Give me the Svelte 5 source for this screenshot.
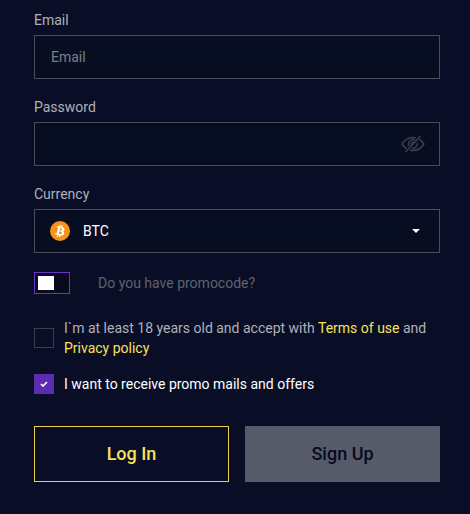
<script lang="ts">
	let email = $state('');
	let password = $state('');
	let currency = $state('BTC');
	let showPassword = $state(false);
	let hasPromocode = $state(false);
	let acceptTerms = $state(false);
	let acceptPromo = $state(true);
</script>

<form class="signup" onsubmit={(e) => e.preventDefault()}>
	<div class="field">
		<label for="email">Email</label>
		<input id="email" class="control" type="email" placeholder="Email" bind:value={email} />
	</div>

	<div class="field">
		<label for="password">Password</label>
		<div class="control-wrapper">
			<input
				id="password"
				class="control with-toggle"
				type={showPassword ? 'text' : 'password'}
				bind:value={password}
			/>
			<button
				type="button"
				class="eye"
				aria-label="Show password"
				onclick={() => (showPassword = !showPassword)}
			>
				<svg viewBox="0 0 24 18" width="24" height="18" fill="none" stroke="currentColor" stroke-width="1.4">
					<path d="M15 2.900C14 2.600 13 2.500 12 2.500C7.500 2.500 3.500 5 1 9C2.300 11 3.700 12.500 5.600 13.600" />
					<path d="M18.300 4.300C20.200 5.500 21.700 7 23 9C20.500 12.900 16.500 15.500 12 15.500C11 15.500 10 15.300 9 15" />
					<path d="M14 5.300A4.200 4.200 0 0 0 8.200 11M16 8A4.200 4.200 0 0 1 11 13.100" />
					<path d="M13 7.200A2 2 0 0 0 10.500 9.700" />
					<path d="M19.500 1L4.500 17" />
				</svg>
			</button>
		</div>
	</div>

	<div class="field">
		<label for="currency">Currency</label>
		<div class="control-wrapper">
			<select id="currency" class="control" bind:value={currency}>
				<option value="BTC">BTC</option>
			</select>
			<svg class="coin" viewBox="0 0 32 32" width="20" height="20" aria-hidden="true">
				<circle cx="16" cy="16" r="16" fill="#f7931a" />
				<path
					fill="#fff"
					d="M23.2 14c.3-2.100-1.300-3.200-3.500-4l.7-2.900-1.700-.4-.7 2.800-1.400-.3.700-2.800-1.700-.4-.7 2.900-3.500-.9-.5 1.900 1.300.3c.7.200.8.600.8 1l-2 7.900c-.1.200-.3.500-.8.400l-1.200-.3-.9 2 3.400.9-.7 2.900 1.700.4.7-2.900 1.400.4-.7 2.800 1.700.4.700-2.900c3 .6 5.200.3 6.100-2.300.8-2.100 0-3.400-1.500-4.200 1.100-.2 1.900-1 2.100-2.400zm-3.900 5.500c-.5 2.100-4.100 1-5.300.7l.9-3.800c1.200.3 4.900.9 4.400 3.100zm.5-5.500c-.5 1.900-3.400.9-4.400.7l.9-3.500c1 .3 4.100.7 3.500 2.800z"
				/>
			</svg>
			<svg class="caret" viewBox="0 0 8 4" width="8" height="4" aria-hidden="true">
				<path d="M0 0H8L4 4Z" fill="#fff" />
			</svg>
		</div>
	</div>

	<label class="promocode">
		<input type="checkbox" role="switch" class="switch" bind:checked={hasPromocode} />
		<span>Do you have promocode?</span>
	</label>

	<div class="agreement">
		<input id="terms" type="checkbox" class="checkbox" bind:checked={acceptTerms} />
		<label for="terms">
			I`m at least 18 years old and accept with
			<a href="#terms-of-use">Terms of use</a> and <a href="#privacy-policy">Privacy policy</a>
		</label>
	</div>

	<div class="agreement promo" class:checked={acceptPromo}>
		<span class="tick-box">
			<input id="promo" type="checkbox" class="checkbox" bind:checked={acceptPromo} />
			{#if acceptPromo}
				<svg class="tick" viewBox="0 0 8 6" width="8" height="6" aria-hidden="true">
					<path d="M1 3L3 5L7 1" fill="none" stroke="#fff" stroke-width="1.7" />
				</svg>
			{/if}
		</span>
		<label for="promo">I want to receive promo mails and offers</label>
	</div>

	<div class="actions">
		<button type="button" class="btn outline">Log In</button>
		<button type="submit" class="btn filled" disabled={!acceptTerms}>Sign Up</button>
	</div>
</form>

<style>
	:global(body) {
		background: #090e26;
	}

	.signup {
		display: flex;
		flex-direction: column;
		padding: 10px 30px 32px 34px;
		color: #b0b1b8;
		font-family: Roboto, sans-serif;
		font-size: 14px;
		line-height: 20px;
	}

	.field {
		display: flex;
		flex-direction: column;
		gap: 5px;
		margin-bottom: 18px;
	}

	.control-wrapper {
		position: relative;
	}

	.control {
		display: block;
		box-sizing: border-box;
		width: 100%;
		height: 44px;
		padding: 0 16px;
		background: #080e22;
		border: 1px solid #484b5a;
		border-radius: 0;
		color: #fff;
		font: inherit;
		outline: none;
	}

	.control::placeholder {
		color: #7c7e89;
		opacity: 1;
	}

	.with-toggle {
		padding-right: 48px;
	}

	select.control {
		appearance: none;
		padding-left: 48px;
	}

	.eye {
		position: absolute;
		top: 13px;
		right: 15px;
		display: flex;
		padding: 0;
		background: none;
		border: none;
		color: #3e414f;
		cursor: pointer;
	}

	.coin {
		position: absolute;
		top: 12px;
		left: 16px;
		pointer-events: none;
	}

	.caret {
		position: absolute;
		top: 20px;
		right: 20px;
		pointer-events: none;
	}

	.promocode {
		display: flex;
		align-items: center;
		gap: 28px;
		min-height: 24px;
		color: #60626e;
	}

	.switch {
		appearance: none;
		box-sizing: border-box;
		width: 36px;
		height: 22px;
		margin: 0;
		padding: 3px;
		background: #080b1e;
		border: 1px solid #6a35c4;
	}

	.switch::before {
		content: '';
		display: block;
		width: 16px;
		height: 14px;
		background: #fff;
	}

	.switch:checked::before {
		margin-left: auto;
	}

	.agreement {
		display: flex;
		align-items: center;
		gap: 10px;
		margin-top: 23px;
	}

	.agreement.promo {
		margin-top: 16px;
	}

	.agreement.checked {
		color: #fff;
	}

	.tick-box {
		position: relative;
		display: flex;
	}

	.checkbox {
		appearance: none;
		box-sizing: border-box;
		flex: none;
		width: 20px;
		height: 20px;
		margin: 0;
		border: 1px solid #393d4b;
	}

	.checkbox:checked {
		background: #5b2bb0;
		border-color: #5b2bb0;
	}

	.tick {
		position: absolute;
		top: 7px;
		left: 6px;
		pointer-events: none;
	}

	a {
		color: #fbe15a;
		text-decoration: none;
	}

	.actions {
		display: grid;
		grid-template-columns: 1fr 1fr;
		gap: 16px;
		margin-top: 32px;
	}

	.btn {
		height: 56px;
		padding: 0 16px;
		border: 1px solid #e9cd4e;
		font: inherit;
		font-size: 18px;
		font-weight: 500;
		cursor: pointer;
	}

	.outline {
		background: transparent;
		color: #fbe15a;
	}

	.filled {
		background: #575a69;
		border-color: #575a69;
		color: #060a20;
	}
</style>
